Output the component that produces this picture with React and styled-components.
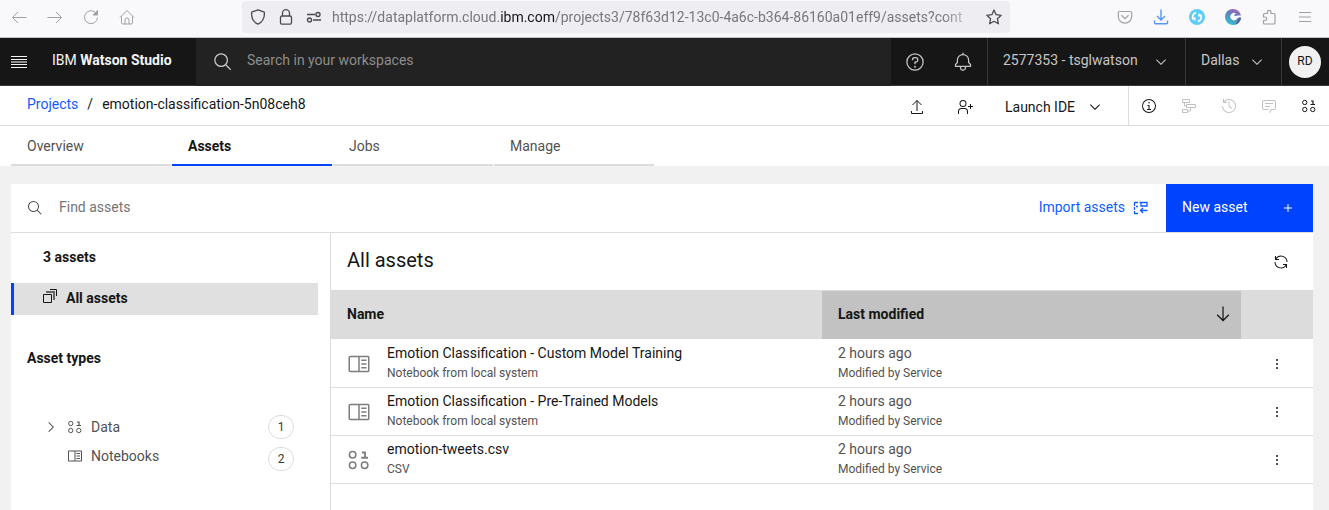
import React from "react";
import styled, { createGlobalStyle, css } from "styled-components";

const GlobalStyle = createGlobalStyle`
  *, *::before, *::after { box-sizing: border-box; }
  body { margin: 0; background: #f1f1f1; color: #161616; }
  body, button, input, table { font-family: Roboto, "Liberation Sans", sans-serif; font-size: 14px; line-height: 20px; }
  button { border: 0; padding: 0; margin: 0; background: transparent; color: inherit; cursor: pointer; }
  input { border: 0; padding: 0; background: transparent; outline: 0; }
  h1, h2, ul, p { margin: 0; padding: 0; font-weight: inherit; font-size: inherit; }
  ul { list-style: none; }
  a { color: inherit; text-decoration: none; }
  svg { display: block; flex: none; }
`;

/* ---------- icons ---------- */

const Icon = ({ size = 16, box = 32, children, ...rest }) => (
  <svg width={size} height={size} viewBox={`0 0 ${box} ${box}`} fill="currentColor" aria-hidden="true" {...rest}>
    {children}
  </svg>
);

const Line = ({ size = 16, box = 16, width = 1, children }) => (
  <Icon size={size} box={box} fill="none" stroke="currentColor" strokeWidth={width}>
    {children}
  </Icon>
);

const SearchIcon = ({ size }) => (
  <Icon size={size}>
    <path d="M29,27.5859l-7.5521-7.5521a11.0177,11.0177,0,1,0-1.4141,1.4141L27.5859,29ZM4,13a9,9,0,1,1,9,9A9.01,9.01,0,0,1,4,13Z" />
  </Icon>
);
const ChevronDown = () => (
  <Icon box={16}><path d="M8 11L3 6 3.7 5.3 8 9.6 12.3 5.3 13 6z" /></Icon>
);
const ChevronRight = () => (
  <Icon box={16}><path d="M11 8L6 13 5.3 12.3 9.6 8 5.3 3.7 6 3z" /></Icon>
);
const HelpIcon = () => (
  <Icon size={20}>
    <path d="M16,2A14,14,0,1,0,30,16,14,14,0,0,0,16,2Zm0,26A12,12,0,1,1,28,16,12,12,0,0,1,16,28Z" />
    <circle cx="16" cy="23.5" r="1.5" />
    <path d="M17,8H15.5A4.49,4.49,0,0,0,11,12.5V13h2v-.5A2.5,2.5,0,0,1,15.5,10H17a2.5,2.5,0,0,1,0,5H15v4.5h2V17a4.5,4.5,0,0,0,0-9Z" />
  </Icon>
);
const BellIcon = () => (
  <Icon size={20}>
    <path d="M28.7071,19.293,26,16.5859V13a10.0136,10.0136,0,0,0-9-9.9492V1H15V3.0508A10.0136,10.0136,0,0,0,6,13v3.5859L3.2929,19.293A1,1,0,0,0,3,20v3a1,1,0,0,0,1,1h7v.7768a5.152,5.152,0,0,0,4.5,5.1987A5.0057,5.0057,0,0,0,21,25V24h7a1,1,0,0,0,1-1V20A1,1,0,0,0,28.7071,19.293ZM19,25a3,3,0,0,1-6,0V24h6Zm8-3H5V20.4141L7.707,17.707A1,1,0,0,0,8,17V13a8,8,0,0,1,16,0v4a1,1,0,0,0,.293.707L27,20.4141Z" />
  </Icon>
);
const MenuIcon = () => (
  <Line>
    <path d="M0 2.5H16M0 13.5H16" />
    <path d="M0 5.500H16M0 10.500H16" />
    <path d="M0 8H16" strokeWidth="2" opacity=".55" />
  </Line>
);
const ExportIcon = () => (
  <Line><path d="M8 12V1.5M3.5 6L8 1.5 12.5 6M2.5 12v2.5h11V12" /></Line>
);
const UserAddIcon = () => (
  <Icon>
    <path d="M32 14L28 14 28 10 26 10 26 14 22 14 22 16 26 16 26 20 28 20 28 16 32 16 32 14z" />
    <path d="M12,4A5,5,0,1,1,7,9a5,5,0,0,1,5-5m0-2a7,7,0,1,0,7,7A7,7,0,0,0,12,2Z" />
    <path d="M22,30H20V25a5,5,0,0,0-5-5H9a5,5,0,0,0-5,5v5H2V25a7,7,0,0,1,7-7h6a7,7,0,0,1,7,7Z" />
  </Icon>
);
const InfoIcon = () => (
  <Icon>
    <path d="M17 22L17 14 13 14 13 16 15 16 15 22 12 22 12 24 20 24 20 22 17 22z" />
    <path d="M16,8a1.5,1.5,0,1,0,1.5,1.5A1.5,1.5,0,0,0,16,8Z" />
    <path d="M16,30A14,14,0,1,1,30,16,14,14,0,0,1,16,30ZM16,4A12,12,0,1,0,28,16,12,12,0,0,0,16,4Z" />
  </Icon>
);
const FlowIcon = () => (
  <Line><path d="M1.5 1.5h7v3h-7zM5.500 6.5h9v3h-9zM1.5 11.5h5v3h-5zM3.500 4.5v3.500h2M9.500 9.500v3.500h-3" /></Line>
);
const HistoryIcon = () => (
  <Icon>
    <path d="M20.59 22L15 16.41 15 7 17 7 17 15.58 22 20.59 20.59 22z" />
    <path d="M16,2A13.94,13.94,0,0,0,6,6.23V2H4v8h8V8H7.080A12,12,0,1,1,4,16H2A14,14,0,1,0,16,2Z" />
  </Icon>
);
const ChatIcon = () => (
  <Icon>
    <path d="M17.74,30,16,29l4-7h6a2,2,0,0,0,2-2V8a2,2,0,0,0-2-2H6A2,2,0,0,0,4,8V20a2,2,0,0,0,2,2h9v2H6a4,4,0,0,1-4-4V8A4,4,0,0,1,6,4H26a4,4,0,0,1,4,4V20a4,4,0,0,1-4,4H21.16Z" />
    <path d="M8 10H24V12H8zM8 16H18V18H8z" />
  </Icon>
);
const DataIcon = ({ size = 16 }) => (
  <Line size={size} box={32} width={2}>
    <circle cx="7.500" cy="9" r="4.300" />
    <circle cx="7.500" cy="23" r="4.300" />
    <circle cx="23.500" cy="23" r="4.300" />
    <path d="M20 6h4v7M19 13h9" strokeWidth="2.400" />
  </Line>
);
const NotebookIcon = ({ size = 16 }) => (
  <Icon size={size}>
    <path d="M19 10H26V12H19zM19 15H26V17H19zM19 20H26V22H19z" />
    <path d="M28,5H4A2.002,2.002,0,0,0,2,7V25a2.0023,2.0023,0,0,0,2,2H28a2.0027,2.0027,0,0,0,2-2V7A2.0023,2.0023,0,0,0,28,5ZM4,7H15V25H4ZM17,25V7H28l.002,18Z" />
  </Icon>
);
const LayersIcon = () => (
  <Line><path d="M1.500 6.500h8v8h-8z" /><path d="M4 4h8v8" strokeWidth="2" opacity=".6" /><path d="M8 1.500h6.500V8" /></Line>
);
const ImportIcon = () => (
  <Line width={1.3}>
    <path d="M5 2.500H1.500V6M1.500 7v3M1.500 11v2.500H5M3 6.500h2" />
    <path d="M6.500 2.500h7.500v3.500H8v-3.500M14.500 10.500h-7M10 8l-2.500 2.500L10 13" />
  </Line>
);
const RenewIcon = () => (
  <Icon>
    <path d="M12 10H6.780A11 11 0 0127 16h2A13 13 0 006 7.680V4H4v8h8zM20 22h5.220A11 11 0 015 16H3a13 13 0 0023 8.320V28h2V20H20z" />
  </Icon>
);
const PlusIcon = () => (
  <Icon><path d="M17 15L17 8 15 8 15 15 8 15 8 17 15 17 15 24 17 24 17 17 24 17 24 15z" /></Icon>
);
const ArrowDownIcon = () => (
  <Icon size={20}><path d="M24.590 16.590L17 24.170 17 4 15 4 15 24.170 7.410 16.590 6 18 16 28 26 18z" /></Icon>
);
const KebabIcon = () => (
  <Icon><circle cx="16" cy="8" r="2" /><circle cx="16" cy="16" r="2" /><circle cx="16" cy="24" r="2" /></Icon>
);

const BackIcon = () => <Line><path d="M15.500 8.500H1.500M7 3L1.500 8.500 7 14" /></Line>;
const ForwardIcon = () => <Line><path d="M.5 8.500h14M9 3L14.500 8.500 9 14" /></Line>;
const ReloadIcon = () => (
  <Line><path d="M14.500 8.500A6.500 6.500 0 1 1 12.500 3.500" /><path d="M14.500 1.500v4.500h-4.500z" fill="currentColor" /></Line>
);
const HomeIcon = () => (
  <Line><path d="M1 8.500L8 1.500l7 7M2.500 7.500v6a1.500 1.500 0 0 0 1.500 1.500h8a1.500 1.500 0 0 0 1.500-1.500v-6M6 15v-4a2 2 0 0 1 4 0v4" /></Line>
);
const ShieldIcon = () => (
  <Line width={1.3}><path d="M8 .800l6.300 2.400c.6 5.500-1.300 9.600-6.300 12C3 12.800 1.100 8.700 1.700 3.200z" strokeLinejoin="round" /></Line>
);
const LockIcon = () => (
  <Line width={1.3}><rect x="2.500" y="7" width="11" height="8.200" rx="1.500" /><path d="M4.500 7V4.200a3.500 3.500 0 0 1 7 0V7" /></Line>
);
const TogglesIcon = () => (
  <Line width={1.400}><path d="M1 5.500h8M7 11h8" /><circle cx="12" cy="5.500" r="2" /><circle cx="3.500" cy="11" r="2" /></Line>
);
const StarIcon = () => (
  <Line width={1.3}><path d="M8 1l2.100 4.700 5.100.6-3.800 3.400 1 5.100L8 12.300l-4.400 2.500 1-5.100L.8 6.300l5.100-.6z" strokeLinejoin="round" /></Line>
);
const PocketIcon = () => (
  <Line width={1.200}><path d="M2.500 2.500h11a1.200 1.200 0 0 1 1.200 1.200V7.500a6.700 6.700 0 0 1-13.400 0V3.700a1.200 1.200 0 0 1 1.200-1.200zM4.800 6.500L8 9.600l3.200-3.100" strokeLinecap="round" /></Line>
);
const DownloadIcon = () => (
  <Line width={1.400}><path d="M8 .5v10.500M4 7l4 4 4-4M1.500 11.500v2a1.300 1.300 0 0 0 1.300 1.300h10.400a1.300 1.300 0 0 0 1.300-1.300v-2" /></Line>
);
const SyncBadge = () => (
  <Icon box={16}>
    <circle cx="8" cy="8" r="8" fill="#62cdf4" />
    <path d="M7 3.700a4.400 4.400 0 0 0-2.600 6.800M9 12.300a4.400 4.400 0 0 0 2.600-6.800" fill="none" stroke="#fff" strokeWidth="1.700" />
    <path d="M3 8.500l3.800 0-.6 3.600zM13 7.500l-3.800 0 .6-3.600z" fill="#fff" />
  </Icon>
);
const SwirlBadge = () => (
  <Icon box={16}>
    <defs>
      <linearGradient id="swirl" x1="0.700" y1="0" x2="0.300" y2="1">
        <stop offset="0" stopColor="#a95fb5" /><stop offset=".4" stopColor="#5a83bd" /><stop offset="1" stopColor="#35c3cf" />
      </linearGradient>
    </defs>
    <circle cx="8" cy="8" r="8" fill="url(#swirl)" />
    <path d="M16 8.500a8 8 0 0 1-6 7.200c1-2.200 3-3.700 3.300-6.200z" fill="#56639c" />
    <path d="M16.200 6.500v1.700c-2 0-3 .3-4.200 1.600a3.700 3.700 0 1 1-1-5.400C9.800 5 9.300 5.800 9.300 7c2.500-.6 4.500-.7 6.900-.5z" fill="#f9f9fb" />
  </Icon>
);
const PuzzleIcon = () => (
  <Line width={1.200}><path d="M6.500 4.500V3a1.700 1.700 0 0 1 3.400 0v1.500h3.100a1 1 0 0 1 1 1v8.500a1 1 0 0 1-1 1H3.500a1 1 0 0 1-1-1v-2.500H4a1.700 1.700 0 0 0 0-3.500H2.500V5.500a1 1 0 0 1 1-1z" /></Line>
);
const BarsIcon = () => <Line width={1.200}><path d="M2 3.500h12M2 8h12M2 12.500h12" /></Line>;

/* ---------- browser bar ---------- */

const BrowserBar = styled.div`
  display: flex;
  align-items: flex-start;
  height: 38px;
  padding: 1px 16px 0 11px;
  background: #f9f9fb;
  border-bottom: 1px solid #c4c4c6;
`;
const BrowserNav = styled.div`
  display: flex;
  gap: 20px;
  flex: 0 1 231px;
  height: 32px;
  align-items: center;
  color: #a0a0a5;
`;
const BrowserTools = styled(BrowserNav)`
  flex: 0 1 303px;
  justify-content: flex-end;
`;
const PlainButton = styled.button`
  display: flex;
  align-items: center;
  justify-content: center;
  color: ${(p) => p.$color || "inherit"};
`;
const AddressBar = styled.div`
  flex: 1;
  min-width: 0;
  display: flex;
  align-items: center;
  gap: 12px;
  height: 32px;
  padding: 0 8px;
  border-radius: 4px;
  background: #eeedf2;
  color: #4a4a50;
`;
const Url = styled.div`
  flex: 1;
  min-width: 0;
  overflow: hidden;
  white-space: nowrap;
  margin: 0 -4px 0 -2px;
  color: #77777c;
  mask-image: linear-gradient(to left, transparent, #000 36px);
  b { font-weight: 400; color: #15141a; }
`;

/* ---------- product header ---------- */

const Header = styled.header`
  display: flex;
  height: 48px;
  background: #161616;
  color: #c6c6c6;
`;
const HeaderCell = styled.div`
  display: flex;
  flex: none;
  border-bottom: 1px solid #393939;
`;
const MenuButton = styled(PlainButton)`
  width: 38px;
  color: #f4f4f4;
`;
const Brand = styled.a`
  width: 158px;
  padding: 12px 0 0 14px;
  color: #f4f4f4;
  white-space: nowrap;
  b { font-weight: 700; }
`;
const GlobalSearch = styled.label`
  flex: 1;
  min-width: 0;
  display: flex;
  align-items: center;
  gap: 14px;
  padding: 0 17px;
  background: #222222;
  input { flex: 1; min-width: 0; color: #f4f4f4; margin-bottom: 4px; }
  input::placeholder { color: #8d8d8d; opacity: 1; }
`;
const HeaderIcon = styled(PlainButton)`width: 48px;`;
const HeaderSelect = styled.button`
  display: flex;
  align-items: center;
  width: ${(p) => p.$width};
  padding: 0 16px 0 15px;
  border-left: 1px solid #393939;
  text-align: left;
  span { flex: 1; white-space: nowrap; margin-bottom: 3px; }
`;
const AvatarCell = styled(PlainButton)`
  width: 48px;
  border-left: 1px solid #393939;
  padding-right: 1px;
`;
const Avatar = styled.span`
  width: 32px;
  height: 32px;
  border-radius: 50%;
  background: #f1f1f1;
  color: #161616;
  font-size: 12px;
  line-height: 30px;
`;

/* ---------- project bar and tabs ---------- */

const ProjectBar = styled.div`
  display: flex;
  height: 40px;
  background: #fff;
  border-bottom: 1px solid #dcdcdc;
`;
const Breadcrumb = styled.nav`
  flex: 1;
  display: flex;
  gap: 9px;
  padding: 8px 0 0 27px;
  a { color: #0f5cff; }
`;
const BarActions = styled.div`
  display: flex;
  padding-top: 2px;
`;
const BarIcon = styled(PlainButton)`
  width: ${(p) => (p.$narrow ? "40px" : "48px")};
`;
const LaunchButton = styled.button`
  display: flex;
  align-items: center;
  width: 139px;
  padding-left: 16px;
  text-align: left;
  span { width: 82px; }
`;
const SidePanelIcons = styled.div`
  display: flex;
  border-left: 1px solid #dcdcdc;
`;
const Tabs = styled.nav`
  display: flex;
  gap: 1px;
  height: 40px;
  padding-left: 11px;
  background: #fff;
`;
const Tab = styled.a`
  width: 160px;
  padding: 10px 16px 0;
  border-bottom: 2px solid #dcdcdc;
  color: #525252;
  ${(p) => p.$active && css`
    border-color: #0043ff;
    color: #161616;
    font-weight: 700;
  `}
`;

/* ---------- assets panel ---------- */

const Page = styled.div`
  display: flex;
  flex-direction: column;
  min-height: 100vh;
`;
const Panel = styled.main`
  flex: 1;
  display: flex;
  flex-direction: column;
  margin: 18px 16px 0 11px;
  background: #fff;
`;
const Toolbar = styled.div`
  display: flex;
  height: 49px;
  border-bottom: 1px solid #dcdcdc;
`;
const FindField = styled.label`
  flex: 1;
  display: flex;
  align-items: center;
  gap: 16px;
  padding-left: 16px;
  color: #525252;
  input { flex: 1; min-width: 0; margin-bottom: 2px; color: #161616; }
  input::placeholder { color: #757575; opacity: 1; }
`;
const ImportButton = styled.button`
  display: flex;
  align-items: center;
  gap: 8px;
  padding: 0 17px 0 16px;
  color: #0f5cff;
  span { margin-bottom: 2px; }
`;
const NewButton = styled.button`
  display: flex;
  align-items: center;
  justify-content: space-between;
  width: 147px;
  padding: 0 17px 0 16px;
  background: #0043ff;
  color: #fff;
  span { margin-bottom: 2px; }
`;
const Columns = styled.div`
  flex: 1;
  display: flex;
`;
const Sidebar = styled.aside`
  flex: none;
  width: 320px;
  border-right: 1px solid #dcdcdc;
`;
const Count = styled.h2`
  padding: 14px 32px 16px;
  font-weight: 700;
`;
const AllAssets = styled.a`
  display: flex;
  align-items: center;
  gap: 8px;
  height: 32px;
  margin-right: 12px;
  padding: 0 28px 2px;
  border-left: 3px solid #0043ff;
  background: #e0e0e0;
  font-weight: 700;
  svg { margin-bottom: 4px; }
`;
const TypesTitle = styled.h2`
  padding: 33px 16px 43px;
  font-weight: 700;
`;
const TypeRow = styled.li`
  display: flex;
  align-items: center;
  gap: 8px;
  height: 32px;
  padding: 0 36px 0 32px;
  color: #525252;
`;
const TypeLabel = styled.a`
  flex: 1;
  display: flex;
  align-items: center;
  gap: 8px;
  padding-left: ${(p) => (p.$leaf ? "24px" : "0")};
  padding-bottom: ${(p) => (p.$leaf ? "6px" : "0")};
`;
const Badge = styled.span`
  width: 26px;
  height: 24px;
  border: 1px solid #dcdcdc;
  border-radius: 13px;
  color: #393939;
  font-size: 12px;
  line-height: 22px;
  text-align: center;
`;
const Content = styled.section`
  flex: 1;
  min-width: 0;
`;
const ContentHead = styled.div`
  display: flex;
  align-items: flex-start;
  justify-content: space-between;
  height: 57px;
  padding: 13px 24px 0 16px;
  h1 { font-size: 20px; line-height: 28px; }
  button { margin-top: 8px; }
`;
const Table = styled.table`
  width: 100%;
  table-layout: fixed;
  border-spacing: 0;
  th, td { padding: 0 16px; text-align: left; }
  th { padding-bottom: 2px; }
  td { height: 48px; border-bottom: 1px solid #dcdcdc; }
  td:last-child { padding: 0 28px; }
`;
const Th = styled.th`
  width: ${(p) => p.$width || "auto"};
  height: 50px;
  background: ${(p) => (p.$sorted ? "#c2c2c2" : "#dcdcdc")};
  border: solid;
  border-width: 1px 0;
  border-color: #dcdcdc #dcdcdc #fff;
  font-weight: 700;
`;
const SortButton = styled.button`
  display: flex;
  align-items: center;
  justify-content: space-between;
  width: 100%;
  font-weight: 700;
  svg { margin-right: -8px; }
`;
const AssetCell = styled.div`
  display: flex;
  align-items: center;
  gap: 16px;
  color: #7d7d7d;
`;
const Primary = styled.p`
  color: ${(p) => (p.$muted ? "#525252" : "#161616")};
  line-height: 20px;
  white-space: nowrap;
`;
const Secondary = styled.p`
  padding-bottom: 2px;
  color: #525252;
  font-size: 12px;
  line-height: 20px;
  white-space: nowrap;
`;

const ASSETS = [
  { name: "Emotion Classification - Custom Model Training", kind: "Notebook from local system", icon: NotebookIcon },
  { name: "Emotion Classification - Pre-Trained Models", kind: "Notebook from local system", icon: NotebookIcon },
  { name: "emotion-tweets.csv", kind: "CSV", icon: DataIcon },
];

export default function App() {
  return (
    <Page>
      <GlobalStyle />
      <BrowserBar>
        <BrowserNav>
          <PlainButton aria-label="Back"><BackIcon /></PlainButton>
          <PlainButton aria-label="Forward"><ForwardIcon /></PlainButton>
          <PlainButton aria-label="Reload"><ReloadIcon /></PlainButton>
          <PlainButton aria-label="Home"><HomeIcon /></PlainButton>
        </BrowserNav>
        <AddressBar>
          <ShieldIcon />
          <LockIcon />
          <TogglesIcon />
          <Url>https://dataplatform.cloud.<b>ibm.com</b>/projects3/78f63d12-13c0-4a6c-b364-86160a01eff9/assets?cont</Url>
          <PlainButton aria-label="Bookmark"><StarIcon /></PlainButton>
        </AddressBar>
        <BrowserTools>
          <PlainButton aria-label="Pocket"><PocketIcon /></PlainButton>
          <PlainButton aria-label="Downloads" $color="#5a96f0"><DownloadIcon /></PlainButton>
          <PlainButton aria-label="Sync"><SyncBadge /></PlainButton>
          <PlainButton aria-label="Profile"><SwirlBadge /></PlainButton>
          <PlainButton aria-label="Extensions"><PuzzleIcon /></PlainButton>
          <PlainButton aria-label="Menu"><BarsIcon /></PlainButton>
        </BrowserTools>
      </BrowserBar>

      <Header>
        <HeaderCell>
          <MenuButton aria-label="Navigation"><MenuIcon /></MenuButton>
          <Brand href="#">IBM <b>Watson Studio</b></Brand>
        </HeaderCell>
        <GlobalSearch>
          <SearchIcon size={20} />
          <input type="text" placeholder="Search in your workspaces" aria-label="Search in your workspaces" />
        </GlobalSearch>
        <HeaderCell>
          <HeaderIcon aria-label="Help"><HelpIcon /></HeaderIcon>
          <HeaderIcon aria-label="Notifications"><BellIcon /></HeaderIcon>
          <HeaderSelect $width="198px"><span>2577353 - tsglwatson</span><ChevronDown /></HeaderSelect>
          <HeaderSelect $width="96px"><span>Dallas</span><ChevronDown /></HeaderSelect>
          <AvatarCell><Avatar>RD</Avatar></AvatarCell>
        </HeaderCell>
      </Header>

      <ProjectBar>
        <Breadcrumb>
          <a href="#">Projects</a><span>/</span><span>emotion-classification-5n08ceh8</span>
        </Breadcrumb>
        <BarActions>
          <BarIcon aria-label="Export"><ExportIcon /></BarIcon>
          <BarIcon aria-label="Add collaborators"><UserAddIcon /></BarIcon>
          <LaunchButton><span>Launch IDE</span><ChevronDown /></LaunchButton>
        </BarActions>
        <SidePanelIcons>
          <BarIcon $narrow aria-label="Information"><InfoIcon /></BarIcon>
          <BarIcon $narrow aria-label="Flow" $color="#c1c1c1"><FlowIcon /></BarIcon>
          <BarIcon $narrow aria-label="History" $color="#c1c1c1"><HistoryIcon /></BarIcon>
          <BarIcon $narrow aria-label="Comments" $color="#c1c1c1"><ChatIcon /></BarIcon>
          <BarIcon $narrow aria-label="Data"><DataIcon /></BarIcon>
        </SidePanelIcons>
      </ProjectBar>
      <Tabs>
        <Tab href="#">Overview</Tab>
        <Tab href="#" $active>Assets</Tab>
        <Tab href="#">Jobs</Tab>
        <Tab href="#">Manage</Tab>
      </Tabs>

      <Panel>
        <Toolbar>
          <FindField>
            <SearchIcon size={16} />
            <input type="text" placeholder="Find assets" aria-label="Find assets" />
          </FindField>
          <ImportButton><span>Import assets</span><ImportIcon /></ImportButton>
          <NewButton><span>New asset</span><PlusIcon /></NewButton>
        </Toolbar>
        <Columns>
          <Sidebar>
            <Count>3 assets</Count>
            <AllAssets href="#"><LayersIcon />All assets</AllAssets>
            <TypesTitle>Asset types</TypesTitle>
            <ul>
              <TypeRow>
                <PlainButton aria-label="Expand Data"><ChevronRight /></PlainButton>
                <TypeLabel href="#"><DataIcon />Data</TypeLabel>
                <Badge>1</Badge>
              </TypeRow>
              <TypeRow>
                <TypeLabel href="#" $leaf><NotebookIcon />Notebooks</TypeLabel>
                <Badge>2</Badge>
              </TypeRow>
            </ul>
          </Sidebar>
          <Content>
            <ContentHead>
              <h1>All assets</h1>
              <PlainButton aria-label="Refresh"><RenewIcon /></PlainButton>
            </ContentHead>
            <Table>
              <thead>
                <tr>
                  <Th $width="50%">Name</Th>
                  <Th $sorted>
                    <SortButton>Last modified<ArrowDownIcon /></SortButton>
                  </Th>
                  <Th $width="72px" aria-label="Actions" />
                </tr>
              </thead>
              <tbody>
                {ASSETS.map(({ name, kind, icon: Glyph }) => (
                  <tr key={name}>
                    <td>
                      <AssetCell>
                        <Glyph size={24} />
                        <div><Primary>{name}</Primary><Secondary>{kind}</Secondary></div>
                      </AssetCell>
                    </td>
                    <td><Primary $muted>2 hours ago</Primary><Secondary>Modified by Service</Secondary></td>
                    <td>
                      <PlainButton aria-label={`Options for ${name}`}><KebabIcon /></PlainButton>
                    </td>
                  </tr>
                ))}
              </tbody>
            </Table>
          </Content>
        </Columns>
      </Panel>
    </Page>
  );
}
